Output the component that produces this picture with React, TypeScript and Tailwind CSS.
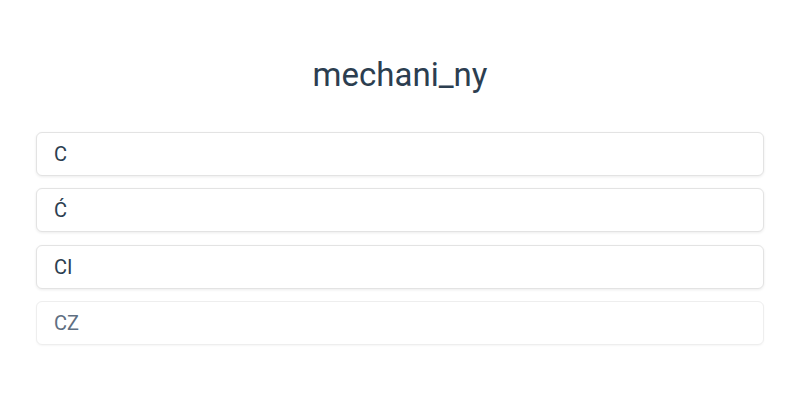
export default function App() {
  const opts = [
    { t: "c", muted: false },
    { t: "ć", muted: false },
    { t: "ci", muted: false },
    { t: "cz", muted: true },
  ];
  return (
    <div className="w-[800px] h-[400px] bg-white" style={{ fontFamily: "Roboto, sans-serif" }}>
      <div className="pt-[52px] px-9">
        <h1 className="text-center text-[33px] leading-[46px] text-[#2c3e50]">mechani_ny</h1>
        <div className="mt-[34px] flex flex-col gap-[12.3px]">
          {opts.map((o) => (
            <div
              key={o.t}
              className={`h-[44px] flex items-center px-[17px] rounded-md border bg-white ${
                o.muted ? "border-[#eeeeee] shadow-[0_1px_2px_rgba(0,0,0,0.04)]" : "border-[#e3e3e3] shadow-[0_1px_3px_rgba(0,0,0,0.08)]"
              }`}
            >
              <span className={`uppercase text-[20px] ${o.muted ? "text-[#5f6f82]" : "text-[#2c3e50]"}`}>{o.t}</span>
            </div>
          ))}
        </div>
      </div>
    </div>
  );
}
